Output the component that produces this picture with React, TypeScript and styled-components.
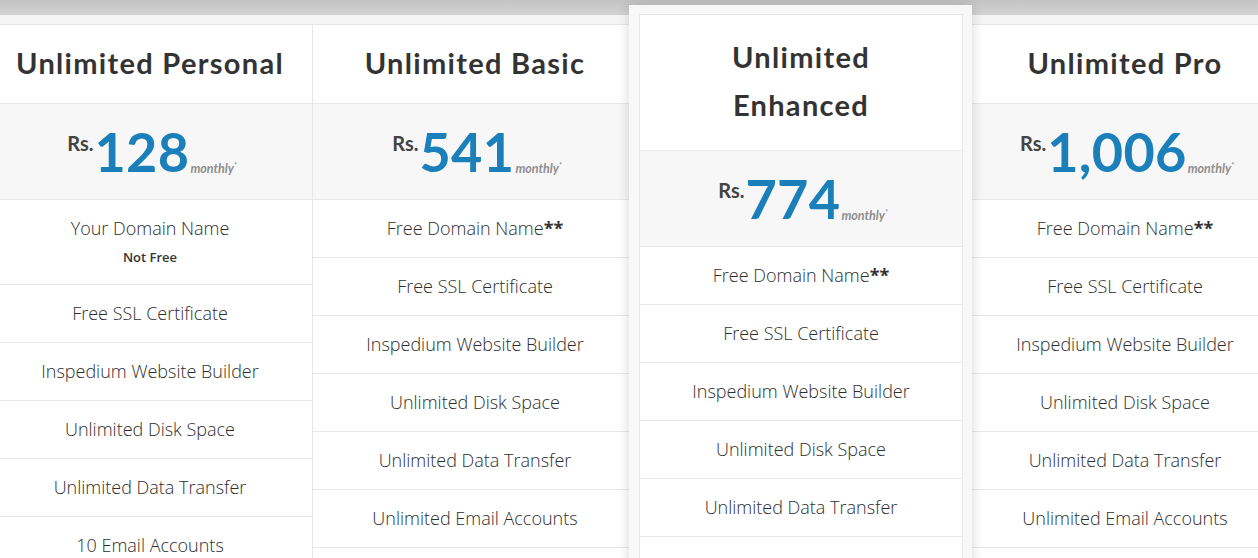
import React from "react";
import styled, { createGlobalStyle } from "styled-components";

const Global = createGlobalStyle`
  html, body { margin: 0; padding: 0; background: #ffffff; overflow: hidden; }
  body { font-family: "Open Sans", "Liberation Sans", sans-serif; }
  * { box-sizing: border-box; }
`;

const Page = styled.div`
  width: 1258px;
  height: 558px;
  overflow: hidden;
  background: #ffffff;
`;

const TopShade = styled.div`
  height: 15px;
  background: linear-gradient(#c3c3c3, #d3d3d3);
`;

const Board = styled.div`
  display: flex;
  align-items: flex-start;
  margin-left: -12px;
`;

const Column = styled.div`
  flex: 0 0 325px;
  padding-top: 9px;
  background: #f5f5f5;
`;

const FeaturedColumn = styled.div`
  flex: 0 0 343px;
  margin: -10px -9px 0 -9px;
  padding: 9px 9px 0 10px;
  background: #f8f8f8;
  position: relative;
  z-index: 2;
  box-shadow: 0 0 12px rgba(0, 0, 0, 0.16);
`;

const Card = styled.div<{ $boxed?: boolean }>`
  background: #ffffff;
  border-top: 1px solid #e6e6e6;
  border-right: 1px solid #e8e8e8;
  ${(p) => (p.$boxed ? "border-left: 1px solid #e8e8e8;" : "")}
  min-height: 600px;
`;

const Header = styled.div<{ $height: number; $shift: number }>`
  height: ${(p) => p.$height}px;
  display: flex;
  align-items: center;
  justify-content: center;
  border-bottom: 1px solid #e8e8e8;
  padding: 0 12px ${(p) => p.$shift}px;
`;

const Title = styled.h2<{ $narrow?: boolean }>`
  margin: 0;
  font-family: Lato, "Liberation Sans", sans-serif;
  font-weight: 700;
  font-size: 29px;
  line-height: 48px;
  letter-spacing: 1.3px;
  color: #333333;
  text-align: center;
  ${(p) => (p.$narrow ? "max-width: 230px;" : "")}
`;

const PriceBox = styled.div`
  height: 96px;
  background: #f7f7f7;
  border-bottom: 1px solid #e8e8e8;
  display: flex;
  align-items: center;
  justify-content: center;
`;

const Price = styled.div`
  display: flex;
  align-items: flex-end;
  font-family: Lato, "Liberation Sans", sans-serif;
  font-weight: 700;
  padding-left: 4px;
`;

const Currency = styled.span`
  font-size: 20px;
  color: #444444;
  align-self: flex-start;
  margin-top: 5px;
  margin-right: 1px;
`;

const Amount = styled.span`
  font-size: 54px;
  line-height: 52px;
  color: #1b80b9;
  letter-spacing: 0.3px;
`;

const Period = styled.span`
  font-size: 12.5px;
  font-style: italic;
  color: #8f8f8f;
  margin-bottom: 1px;
  margin-left: 1px;
  sup { font-size: 7px; }
`;

const Feature = styled.div<{ $tall?: boolean }>`
  height: ${(p) => (p.$tall ? 85 : 58)}px;
  border-bottom: 1px solid #e8e8e8;
  display: flex;
  flex-direction: column;
  align-items: center;
  justify-content: center;
  font-size: 18px;
  font-weight: 300;
  color: #2e2e2e;
  text-align: center;
  padding-bottom: 2px;
  b { font-weight: 700; color: #333; }
`;

const Note = styled.span`
  font-size: 13px;
  font-weight: 600;
  color: #333333;
  margin-top: 8px;
`;

type Plan = {
  name: string;
  price: string;
  featured?: boolean;
  personal?: boolean;
};

const plans: Plan[] = [
  { name: "Unlimited Personal", price: "128", personal: true },
  { name: "Unlimited Basic", price: "541" },
  { name: "Unlimited Enhanced", price: "774", featured: true },
  { name: "Unlimited Pro", price: "1,006" },
];

const Features: React.FC<{ personal?: boolean }> = ({ personal }) => (
  <>
    {personal ? (
      <Feature $tall>
        Your Domain Name
        <Note>Not Free</Note>
      </Feature>
    ) : (
      <Feature>
        <span>
          Free Domain Name<b>**</b>
        </span>
      </Feature>
    )}
    <Feature>Free SSL Certificate</Feature>
    <Feature>Inspedium Website Builder</Feature>
    <Feature>Unlimited Disk Space</Feature>
    <Feature>Unlimited Data Transfer</Feature>
    <Feature>{personal ? "10 Email Accounts" : "Unlimited Email Accounts"}</Feature>
    <Feature>Unlimited Databases</Feature>
  </>
);

const PlanBody: React.FC<{ plan: Plan }> = ({ plan }) => (
  <Card $boxed={plan.featured}>
    <Header $height={plan.featured ? 136 : 79} $shift={plan.featured ? 4 : 2}>
      <Title $narrow={plan.featured}>{plan.name}</Title>
    </Header>
    <PriceBox>
      <Price>
        <Currency>Rs.</Currency>
        <Amount>{plan.price}</Amount>
        <Period>
          monthly<sup>*</sup>
        </Period>
      </Price>
    </PriceBox>
    <Features personal={plan.personal} />
  </Card>
);

export default function App() {
  return (
    <Page>
      <Global />
      <TopShade />
      <Board>
        {plans.map((plan) =>
          plan.featured ? (
            <FeaturedColumn key={plan.name}>
              <PlanBody plan={plan} />
            </FeaturedColumn>
          ) : (
            <Column key={plan.name}>
              <PlanBody plan={plan} />
            </Column>
          )
        )}
      </Board>
    </Page>
  );
}
